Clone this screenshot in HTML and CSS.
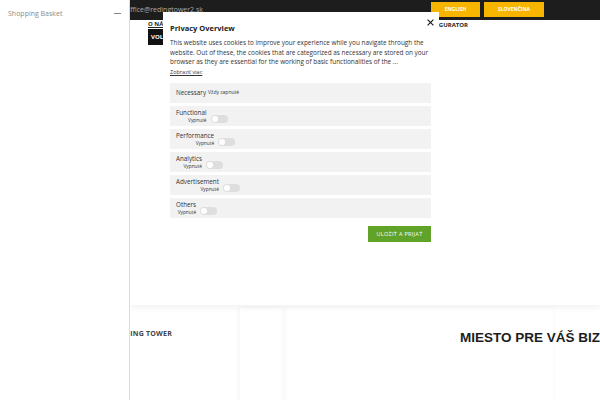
FILE: index.html
```html
<!DOCTYPE html>
<html lang="sk">
<head>
<meta charset="utf-8">
<title>Reding Tower 2</title>
<link rel="stylesheet" href="styles.css">
</head>
<body>
<div class="page">
  <header class="topbar">
    <span class="email">office@redingtower2.sk</span>
    <div class="langs">
      <a class="lang">ENGLISH</a>
      <a class="lang">SLOVENČINA</a>
    </div>
  </header>
  <nav class="nav">
    <div class="nav-left">
      <a class="nav-link">O NÁS</a>
      <a class="nav-btn">VOLNÉ PRIESTORY</a>
    </div>
    <a class="nav-link nav-right">KONFIGURATOR</a>
  </nav>
  <div class="hero-band"></div>
  <section class="lower">
    <div class="brand">REDING TOWER</div>
    <div class="cards">
      <div class="card-narrow"></div>
      <div class="card-wide">
        <h2 class="headline">MIESTO PRE VÁŠ BIZNIS</h2>
      </div>
    </div>
  </section>
</div>

<aside class="sidebar">
  <div class="sidebar-head">
    <span>Shopping Basket</span>
    <span class="minus"></span>
  </div>
</aside>

<div class="modal">
  <button class="close" aria-label="Zavrieť">
    <svg width="7" height="7" viewBox="0 0 7 7"><path d="M0.6 0.6 L6.4 6.4 M6.4 0.6 L0.6 6.4" stroke="#222" stroke-width="1.2"/></svg>
  </button>
  <h3 class="m-title">Privacy Overview</h3>
  <p class="m-text">This website uses cookies to improve your experience while you navigate through the website. Out of these, the cookies that are categorized as necessary are stored on your browser as they are essential for the working of basic functionalities of the ...</p>
  <a class="more">Zobraziť viac</a>
  <div class="rows">
    <div class="row row-nec"><span class="r-title">Necessary</span><span class="always">Vždy zapnuté</span></div>
    <div class="row"><div class="sw"><span class="r-title">Functional</span><span class="off">Vypnuté</span><span class="toggle"></span></div></div>
    <div class="row"><div class="sw"><span class="r-title">Performance</span><span class="off">Vypnuté</span><span class="toggle"></span></div></div>
    <div class="row"><div class="sw"><span class="r-title">Analytics</span><span class="off">Vypnuté</span><span class="toggle"></span></div></div>
    <div class="row"><div class="sw"><span class="r-title">Advertisement</span><span class="off">Vypnuté</span><span class="toggle"></span></div></div>
    <div class="row"><div class="sw"><span class="r-title">Others</span><span class="off">Vypnuté</span><span class="toggle"></span></div></div>
  </div>
  <div class="actions"><button class="save">ULOŽIŤ A PRIJAŤ</button></div>
</div>
</body>
</html>
```

FILE: styles.css
```css
* { box-sizing: border-box; }
html, body { margin: 0; padding: 0; }
body {
  width: 600px;
  height: 400px;
  overflow: hidden;
  background: #fff;
  font-family: "Open Sans", "DejaVu Sans", sans-serif;
  font-size: 7px;
  line-height: 1.3;
  color: #333;
  position: relative;
}

.page { width: 600px; }

.topbar {
  height: 20px;
  background: #1d1d1d;
  display: flex;
  align-items: center;
  justify-content: space-between;
  padding: 0 56px 0 126px;
}
.email { color: #a9a9a9; font-size: 7px; }
.langs { display: flex; gap: 4px; align-self: flex-start; padding-top: 2px; }
.lang {
  background: #f7b500;
  color: #fff;
  font-size: 5px;
  font-weight: 700;
  height: 15px;
  display: flex;
  align-items: center;
  justify-content: center;
}
.lang:first-child { width: 49px; }
.lang:last-child { width: 60px; }

.nav {
  display: flex;
  justify-content: space-between;
  padding: 0 132px 0 148px;
  height: 40px;
}
.nav-left { display: flex; flex-direction: column; align-items: flex-start; gap: 1px; }
.nav-link { font-size: 6px; line-height: 7px; font-weight: 700; color: #222; text-decoration: underline; margin-top: 1px; }
.nav-right { text-decoration: none; margin-top: 2px; }
.nav-btn {
  background: #111;
  color: #fff;
  font-size: 6px;
  line-height: 6px;
  font-weight: 700;
  padding: 5px 3px;
}

.hero-band {
  height: 245px;
  margin-left: 130px;
  box-shadow: 0 3px 6px rgba(0,0,0,0.05);
}

.lower {
  display: flex;
  padding-top: 3px;
}
.brand {
  width: 240px;
  padding: 21px 0 0 116px;
  font-size: 7px;
  font-weight: 700;
  color: #444;
  letter-spacing: 0.2px;
  white-space: nowrap;
}
.cards { display: flex; height: 100px; }
.card-narrow {
  width: 43px;
  box-shadow: -2px 0 4px rgba(0,0,0,0.035), 2px 0 4px rgba(0,0,0,0.04);
}
.card-wide {
  width: 270px;
  box-shadow: 0 0 5px rgba(0,0,0,0.04);
  position: relative;
}
.headline {
  margin: 22px 0 0 177px;
  font-family: "Liberation Sans", Arial, sans-serif;
  font-size: 13.5px;
  line-height: 16px;
  font-weight: 700;
  color: #1d1d1d;
  white-space: nowrap;
}

.sidebar {
  position: fixed;
  left: 0;
  top: 0;
  width: 130px;
  height: 400px;
  background: #fff;
  border-right: 1px solid #dcdcdc;
}
.sidebar-head {
  display: flex;
  justify-content: space-between;
  align-items: center;
  padding: 9px 8px 0 8px;
  font-size: 7px;
  color: #8a8a8a;
}
.minus { width: 7px; height: 1px; background: #888; }

.modal {
  position: absolute;
  left: 163px;
  top: 12px;
  width: 276px;
  height: 238px;
  background: #fff;
  padding: 11px 8px 0 7px;
}
.close {
  position: absolute;
  right: 5px;
  top: 7px;
  border: 0;
  background: none;
  padding: 0;
  width: 7px;
  height: 7px;
  display: flex;
}
.m-title { margin: 0; font-size: 7.5px; font-weight: 700; color: #222; line-height: 10px; }
.m-text { margin: 5px 0 0; font-size: 6.4px; line-height: 9.5px; color: #333; }
.more { display: block; margin-top: 1px; font-size: 5.5px; line-height: 8px; color: #333; text-decoration: underline; }

.rows { display: flex; flex-direction: column; gap: 3px; margin-top: 7px; }
.row {
  background: #f2f2f2;
  height: 20px;
  padding: 0 6px;
  display: flex;
  align-items: center;
}
.row-nec { gap: 2px; }
.r-title { font-size: 6.3px; color: #333; line-height: 7px; }
.always { font-size: 5px; color: #333; }
.sw {
  display: grid;
  grid-template-columns: auto auto;
  align-items: center;
  column-gap: 4px;
  margin-top: 1px;
}
.sw .r-title { grid-column: 1; grid-row: 1; }
.off { grid-column: 1; grid-row: 2; justify-self: end; font-size: 4.8px; line-height: 6px; color: #333; }
.toggle {
  grid-column: 2; grid-row: 2;
  width: 17px; height: 8px;
  border-radius: 4px;
  background: #dedede;
  position: relative;
  margin-top: -1px;
}
.toggle::before {
  content: "";
  position: absolute;
  left: 1px; top: 1px;
  width: 6px; height: 6px;
  border-radius: 50%;
  background: #fff;
}

.actions { display: flex; justify-content: flex-end; margin-top: 8px; }
.save {
  background: #61a229;
  color: #fff;
  border: 0;
  font-family: inherit;
  font-size: 5.5px;
  letter-spacing: 0.3px;
  width: 63px;
  height: 16px;
  padding: 0;
}
```
